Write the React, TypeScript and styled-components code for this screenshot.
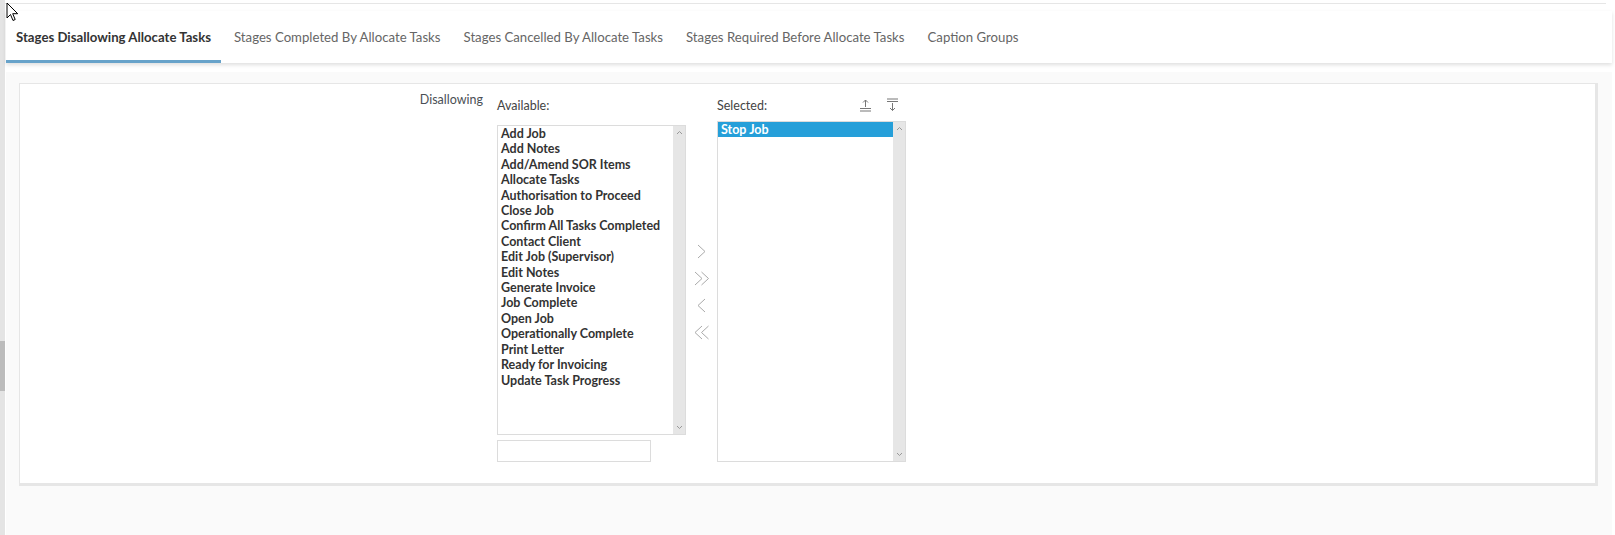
import React from "react";
import styled, { createGlobalStyle } from "styled-components";

const GlobalStyle = createGlobalStyle`
  html, body {
    margin: 0;
    padding: 0;
    background: #ffffff;
    font-family: Lato, "Open Sans", sans-serif;
    color: #333;
  }
`;

const Frame = styled.div`
  position: relative;
  display: flex;
  height: 535px;
  overflow: hidden;
`;

// thin outer scrollbar strip on the far left
const EdgeBar = styled.div`
  width: 5px;
  flex-shrink: 0;
  background: #e4e4e4;
  display: flex;
  flex-direction: column;
`;

const EdgeThumb = styled.div`
  margin-top: 341px;
  height: 50px;
  background: #bcbcbc;
`;

const Main = styled.div`
  flex: 1;
  display: flex;
  flex-direction: column;
  min-width: 0;
`;

const TopRule = styled.div`
  margin: 3px 9px 0 0;
  height: 1px;
  background: #e6e6e6;
`;

const TabBar = styled.nav`
  margin: 7px 3px 0 1px;
  height: 52px;
  background: #fff;
  display: flex;
  box-shadow: 0 2px 4px rgba(0, 0, 0, 0.13);
  position: relative;
  z-index: 1;
`;

const Tab = styled.div<{ $active?: boolean }>`
  display: flex;
  align-items: center;
  padding: 2px 10px 0;
  margin-right: 3px;
  font-size: 13.2px;
  font-weight: ${(p) => (p.$active ? 700 : 400)};
  color: ${(p) => (p.$active ? "#333" : "#666")};
  border-bottom: 3px solid ${(p) => (p.$active ? "#68a3ca" : "transparent")};
  box-sizing: border-box;
  white-space: nowrap;
`;

const Content = styled.div`
  flex: 1;
  margin: 9px 3px 0 1px;
  background: #fafafa;
  padding: 11px 14px 0 13px;
`;

const Card = styled.section`
  background: #fff;
  border: 1px solid #e6e6e6;
  border-right-width: 3px;
  border-bottom-width: 3px;
  height: 391px;
  display: flex;
  padding-top: 8px;
  box-sizing: content-box;
`;

const FieldLabel = styled.div`
  width: 463px;
  text-align: right;
  font-size: 12.5px;
  color: #4a4f55;
  line-height: 16px;
  padding-right: 14px;
  box-sizing: content-box;
`;

const Column = styled.div`
  width: 189px;
  display: flex;
  flex-direction: column;
`;

const ColumnHead = styled.div<{ $h: number }>`
  height: ${(p) => p.$h}px;
  display: flex;
  align-items: flex-start;
  justify-content: space-between;
  padding-top: 6px;
  box-sizing: border-box;
  font-size: 12.5px;
  color: #444;
`;

const HeadTools = styled.div`
  display: flex;
  gap: 14px;
  padding-right: 7px;
`;

const ListBox = styled.div<{ $h: number }>`
  height: ${(p) => p.$h}px;
  border: 1px solid #dcdcdc;
  display: flex;
  box-sizing: border-box;
  background: #fff;
`;

const Items = styled.ul`
  flex: 1;
  margin: 0;
  padding: 0;
  list-style: none;
`;

const Item = styled.li<{ $selected?: boolean }>`
  font-size: 12.5px;
  font-weight: 700;
  line-height: 15.4px;
  padding-left: 3px;
  white-space: nowrap;
  color: ${(p) => (p.$selected ? "#fff" : "#333")};
  background: ${(p) => (p.$selected ? "#259fd9" : "transparent")};
`;

const Scroll = styled.div`
  width: 12px;
  background: #e6e6e6;
  display: flex;
  flex-direction: column;
  justify-content: space-between;
  align-items: center;
  padding: 4px 0;
`;

const Filter = styled.input`
  margin-top: 5px;
  width: 154px;
  height: 22px;
  border: 1px solid #dcdcdc;
  box-sizing: border-box;
  outline: none;
`;

const Movers = styled.div`
  width: 31px;
  display: flex;
  flex-direction: column;
  align-items: center;
  padding-top: 146px;
`;

const MoveButton = styled.button`
  width: 24px;
  height: 27px;
  padding: 0;
  border: none;
  background: transparent;
  display: flex;
  align-items: center;
  justify-content: center;
  color: #aaa;
`;

const ToolButton = styled.button`
  width: 13px;
  height: 14px;
  padding: 0;
  border: none;
  background: transparent;
  color: #777;
  display: flex;
`;

const Pointer = styled.svg`
  position: absolute;
  left: 6px;
  top: 2px;
  z-index: 5;
`;

const Caret = ({ up }: { up?: boolean }) => (
  <svg width="7" height="5" viewBox="0 0 7 5">
    <polyline
      points={up ? "1,4 3.5,1.5 6,4" : "1,1 3.5,3.5 6,1"}
      fill="none"
      stroke="#999"
      strokeWidth="1"
    />
  </svg>
);

const Chevron = ({ dir, double }: { dir: "r" | "l"; double?: boolean }) => {
  const single = (x: number) =>
    dir === "r"
      ? `${x},1 ${x + 7},7.5 ${x},14`
      : `${x + 7},1 ${x},7.5 ${x + 7},14`;
  return (
    <svg width={double ? 16 : 9} height="15" viewBox={`0 0 ${double ? 16 : 9} 15`}>
      <polyline points={single(1)} fill="none" stroke="currentColor" strokeWidth="1" />
      {double && <polyline points={single(7.5)} fill="none" stroke="currentColor" strokeWidth="1" />}
    </svg>
  );
};

const MoveTopIcon = () => (
  <svg width="13" height="14" viewBox="0 0 13 14">
    <path d="M6.5 2v7M4 4.5l2.5-2.5 2.5 2.5" fill="none" stroke="currentColor" strokeWidth="1" />
    <path d="M1 10.5h11M1 13h11" stroke="currentColor" strokeWidth="1" />
  </svg>
);

const MoveBottomIcon = () => (
  <svg width="13" height="14" viewBox="0 0 13 14">
    <path d="M1 1h11M1 3.5h11" stroke="currentColor" strokeWidth="1" />
    <path d="M6.5 5v7.5M4 10l2.5 2.5 2.5-2.5" fill="none" stroke="currentColor" strokeWidth="1" />
  </svg>
);

const tabs = [
  "Stages Disallowing Allocate Tasks",
  "Stages Completed By Allocate Tasks",
  "Stages Cancelled By Allocate Tasks",
  "Stages Required Before Allocate Tasks",
  "Caption Groups",
];

const available = [
  "Add Job",
  "Add Notes",
  "Add/Amend SOR Items",
  "Allocate Tasks",
  "Authorisation to Proceed",
  "Close Job",
  "Confirm All Tasks Completed",
  "Contact Client",
  "Edit Job (Supervisor)",
  "Edit Notes",
  "Generate Invoice",
  "Job Complete",
  "Open Job",
  "Operationally Complete",
  "Print Letter",
  "Ready for Invoicing",
  "Update Task Progress",
];

const selected = ["Stop Job"];

export default function App() {
  return (
    <>
      <GlobalStyle />
      <Frame>
        <EdgeBar>
          <EdgeThumb />
        </EdgeBar>
        <Main>
          <TopRule />
          <TabBar>
            {tabs.map((t, i) => (
              <Tab key={t} $active={i === 0}>
                {t}
              </Tab>
            ))}
          </TabBar>
          <Content>
            <Card>
              <FieldLabel>Disallowing</FieldLabel>
              <Column>
                <ColumnHead $h={33}>Available:</ColumnHead>
                <ListBox $h={310}>
                  <Items>
                    {available.map((a) => (
                      <Item key={a}>{a}</Item>
                    ))}
                  </Items>
                  <Scroll>
                    <Caret up />
                    <Caret />
                  </Scroll>
                </ListBox>
                <Filter />
              </Column>
              <Movers>
                <MoveButton title="Add">
                  <Chevron dir="r" />
                </MoveButton>
                <MoveButton title="Add all">
                  <Chevron dir="r" double />
                </MoveButton>
                <MoveButton title="Remove">
                  <Chevron dir="l" />
                </MoveButton>
                <MoveButton title="Remove all">
                  <Chevron dir="l" double />
                </MoveButton>
              </Movers>
              <Column>
                <ColumnHead $h={29}>
                  Selected:
                  <HeadTools>
                    <ToolButton title="Move to top">
                      <MoveTopIcon />
                    </ToolButton>
                    <ToolButton title="Move to bottom">
                      <MoveBottomIcon />
                    </ToolButton>
                  </HeadTools>
                </ColumnHead>
                <ListBox $h={341}>
                  <Items>
                    {selected.map((s) => (
                      <Item key={s} $selected>
                        {s}
                      </Item>
                    ))}
                  </Items>
                  <Scroll>
                    <Caret up />
                    <Caret />
                  </Scroll>
                </ListBox>
              </Column>
            </Card>
          </Content>
        </Main>
        <Pointer width="13" height="20" viewBox="0 0 13 20">
          <path
            d="M1 1v15l3.5-3.5 2.5 6 2.2-1-2.5-5.8h5z"
            fill="#fff"
            stroke="#000"
            strokeWidth="1"
            strokeLinejoin="round"
          />
        </Pointer>
      </Frame>
    </>
  );
}
